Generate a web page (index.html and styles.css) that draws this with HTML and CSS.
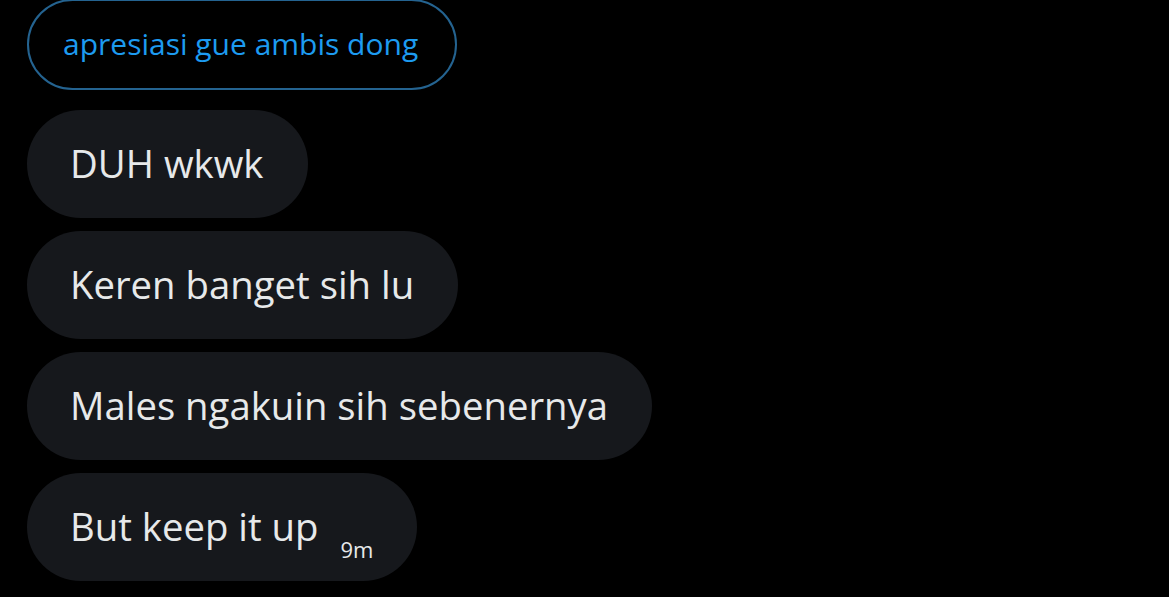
FILE: index.html
```html
<!DOCTYPE html>
<html>
<head>
<meta charset="utf-8">
<link rel="stylesheet" href="styles.css">
</head>
<body>
<div class="thread">
  <div class="quote">apresiasi gue ambis dong</div>
  <div class="bubble">DUH wkwk</div>
  <div class="bubble">Keren banget sih lu</div>
  <div class="bubble">Males ngakuin sih sebenernya</div>
  <div class="bubble">But keep it up<span class="time">9m</span></div>
</div>
</body>
</html>
```
FILE: styles.css
```css
html, body {
  margin: 0;
  background: #000;
  height: 100%;
  overflow: hidden;
}
body {
  font-family: "Open Sans", "Noto Sans", sans-serif;
}
.thread {
  display: flex;
  flex-direction: column;
  align-items: flex-start;
  gap: 13px;
  padding-left: 27px;
  margin-top: -1px;
}
.quote {
  box-sizing: border-box;
  height: 91px;
  margin-bottom: 7px;
  display: flex;
  align-items: center;
  padding: 0 37px 2px 34px;
  border: 2px solid #246390;
  border-radius: 46px;
  color: #1d9bf0;
  font-size: 30px;
}
.bubble {
  box-sizing: border-box;
  height: 108px;
  display: flex;
  align-items: center;
  padding: 0 44px 3px 43px;
  background: #16181c;
  border-radius: 54px;
  color: #e7e9ea;
  font-size: 38.3px;
}
.time {
  font-size: 22px;
  margin-left: 22px;
  padding-top: 46px;
  color: #e7e9ea;
}
```
